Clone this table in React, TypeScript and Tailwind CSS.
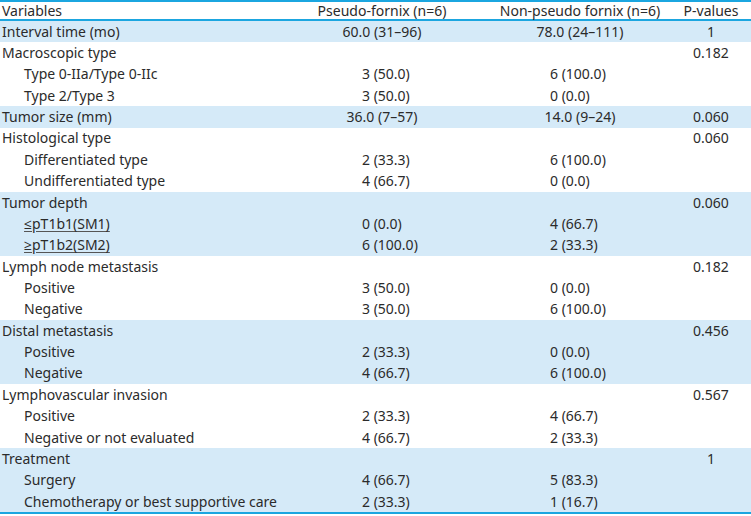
type Row = {
  label: string;
  sub?: boolean;
  a?: string;
  b?: string;
  p?: string;
  hl?: boolean;
  u?: boolean;
};

const rows: Row[] = [
  { label: "Interval time (mo)", a: "60.0 (31–96)", b: "78.0 (24–111)", p: "1", hl: true },
  { label: "Macroscopic type", p: "0.182" },
  { label: "Type 0-IIa/Type 0-IIc", sub: true, a: "3 (50.0)", b: "6 (100.0)" },
  { label: "Type 2/Type 3", sub: true, a: "3 (50.0)", b: "0 (0.0)" },
  { label: "Tumor size (mm)", a: "36.0 (7–57)", b: "14.0 (9–24)", p: "0.060", hl: true },
  { label: "Histological type", p: "0.060" },
  { label: "Differentiated type", sub: true, a: "2 (33.3)", b: "6 (100.0)" },
  { label: "Undifferentiated type", sub: true, a: "4 (66.7)", b: "0 (0.0)" },
  { label: "Tumor depth", p: "0.060", hl: true },
  { label: "≤pT1b1(SM1)", sub: true, a: "0 (0.0)", b: "4 (66.7)", hl: true, u: true },
  { label: "≥pT1b2(SM2)", sub: true, a: "6 (100.0)", b: "2 (33.3)", hl: true, u: true },
  { label: "Lymph node metastasis", p: "0.182" },
  { label: "Positive", sub: true, a: "3 (50.0)", b: "0 (0.0)" },
  { label: "Negative", sub: true, a: "3 (50.0)", b: "6 (100.0)" },
  { label: "Distal metastasis", p: "0.456", hl: true },
  { label: "Positive", sub: true, a: "2 (33.3)", b: "0 (0.0)", hl: true },
  { label: "Negative", sub: true, a: "4 (66.7)", b: "6 (100.0)", hl: true },
  { label: "Lymphovascular invasion", p: "0.567" },
  { label: "Positive", sub: true, a: "2 (33.3)", b: "4 (66.7)" },
  { label: "Negative or not evaluated", sub: true, a: "4 (66.7)", b: "2 (33.3)" },
  { label: "Treatment", p: "1", hl: true },
  { label: "Surgery", sub: true, a: "4 (66.7)", b: "5 (83.3)", hl: true },
  { label: "Chemotherapy or best supportive care", sub: true, a: "2 (33.3)", b: "1 (16.7)", hl: true },
];

const grid = "grid grid-cols-[300px_164px_25px_182px_80px] items-center";

export default function App() {
  return (
    <div
      className="w-[751px] h-[516px] bg-white text-[14px] text-[#2b2b2b] leading-none"
      style={{ fontFamily: '"Noto Sans", "Open Sans", sans-serif' }}
    >
      <div className="border-t-2 border-b-2 border-[#1ba6e0]">
        {/* Header */}
        <div className={`${grid} h-[19px] border-b-2 border-[#1ba6e0]`}>
          <div className="pl-[2px]">Variables</div>
          <div className="text-center">Pseudo-fornix (n=6)</div>
          <div />
          <div className="text-center">Non-pseudo fornix (n=6)</div>
          <div className="text-center">P-values</div>
        </div>

        {rows.map((r, i) => (
          <div
            key={i}
            className={`${grid} h-[21.36px] ${r.hl ? "bg-[#d5eaf8]" : "bg-white"}`}
          >
            <div className={`whitespace-nowrap ${r.sub ? "pl-[24px]" : "pl-[2px]"}`}>
              {r.u ? (
                <span className="underline decoration-[#555] underline-offset-2">{r.label}</span>
              ) : (
                r.label
              )}
            </div>
            <div className={r.sub ? "pl-[62px]" : "text-center"}>{r.a}</div>
            <div />
            <div className={r.sub ? "pl-[61px]" : "text-center"}>{r.b}</div>
            <div className="text-center">{r.p}</div>
          </div>
        ))}
      </div>
    </div>
  );
}
